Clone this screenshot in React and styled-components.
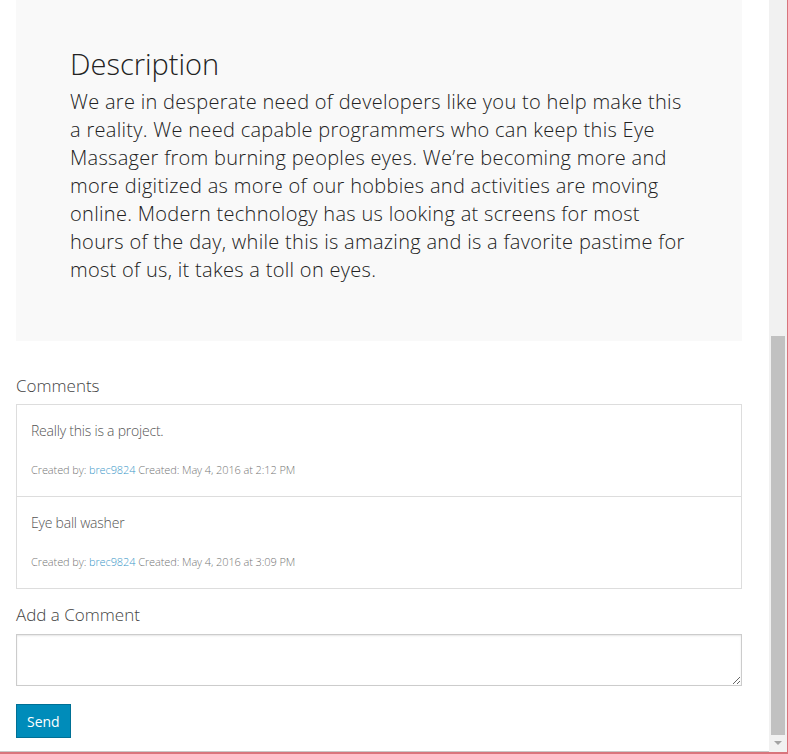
import React from 'react';
import styled, { createGlobalStyle } from 'styled-components';

const GlobalStyle = createGlobalStyle`
  html, body {
    margin: 0;
    padding: 0;
    background: #fff;
    overflow: hidden;
  }
  * { box-sizing: border-box; }
`

const Frame = styled.div`
  display: flex;
  width: 788px;
  height: 754px;
  border-right: 1px solid #d9747c;
  border-bottom: 2px solid #d9747c;
  font-family: 'Open Sans', 'Liberation Sans', sans-serif;
  font-weight: 300;
`

const Page = styled.div`
  flex: 1;
  display: flex;
  flex-direction: column;
  padding: 0 27px 0 16px;
  border-bottom: 1px solid #c8c8c8;
  overflow: hidden;
`

const DescriptionPanel = styled.section`
  background: #f9f9f9;
  padding: 45px 54px 57px;
`

const Heading = styled.h2`
  margin: 0;
  font-size: 29px;
  line-height: 38px;
  font-weight: 300;
  color: #222;
`

const Body = styled.p`
  margin: 5px 0 0;
  font-size: 20px;
  line-height: 28px;
  letter-spacing: 0.3px;
  color: #222;
`

const Label = styled.div`
  margin-top: ${p => p.top}px;
  font-size: 17px;
  line-height: 24px;
  color: #444;
`

const CommentList = styled.div`
  margin-top: 6px;
  border: 1px solid #ddd;
`

const Comment = styled.div`
  padding: 16px 14px 18px;
  & + & { border-top: 1px solid #ddd; }
`

const CommentText = styled.div`
  font-size: 14px;
  line-height: 20px;
  letter-spacing: -0.22px;
  color: #555;
`

const Meta = styled.div`
  margin-top: 21px;
  font-size: 11px;
  line-height: 16px;
  letter-spacing: -0.1px;
  color: #777;
`

const User = styled.span`
  color: #3b98c9;
`

const TextArea = styled.textarea`
  display: block;
  width: 100%;
  height: 52px;
  margin-top: 7px;
  border: 1px solid #ccc;
  box-shadow: inset 0 1px 2px rgba(0, 0, 0, 0.1);
  background: #fff;
  font-family: inherit;
  resize: vertical;
`

const SendButton = styled.button`
  align-self: flex-start;
  margin-top: 18px;
  height: 34px;
  padding: 0 10px;
  border: 1px solid #007095;
  background: #008cba;
  color: #fff;
  font-family: 'Open Sans', 'Liberation Sans', sans-serif;
  font-size: 14px;
  font-weight: 400;
`

const ScrollTrack = styled.div`
  width: 18px;
  display: flex;
  flex-direction: column;
  background: #f1f1f1;
  padding: 336px 2px 0;
`

const ScrollThumb = styled.div`
  height: 399px;
  background: #c1c1c1;
`

const ScrollArrow = styled.div`
  margin: 6px auto 0;
  width: 0;
  height: 0;
  border-left: 4px solid transparent;
  border-right: 4px solid transparent;
  border-top: 4px solid #a3a3a3;
`

const comments = [
  { text: 'Really this is a project.', user: 'brec9824', date: 'May 4, 2016 at 2:12 PM' },
  { text: 'Eye ball washer', user: 'brec9824', date: 'May 4, 2016 at 3:09 PM' },
];

const App = () => {
  return (
    <Frame>
      <GlobalStyle />
      <Page>
        <DescriptionPanel>
          <Heading>Description</Heading>
          <Body>
            We are in desperate need of developers like you to help make this a reality. We need capable
            programmers who can keep this Eye Massager from burning peoples eyes. We’re becoming more and
            more digitized as more of our hobbies and activities are moving online. Modern technology has us
            looking at screens for most hours of the day, while this is amazing and is a favorite pastime for
            most of us, it takes a toll on eyes.
          </Body>
        </DescriptionPanel>

        <Label top={33}>Comments</Label>
        <CommentList>
          {comments.map((c, i) => (
            <Comment key={i}>
              <CommentText>{c.text}</CommentText>
              <Meta>Created by: <User>{c.user}</User> Created: {c.date}</Meta>
            </Comment>
          ))}
        </CommentList>

        <Label top={14}>Add a Comment</Label>
        <TextArea />
        <SendButton type="button">Send</SendButton>
      </Page>
      <ScrollTrack>
        <ScrollThumb />
        <ScrollArrow />
      </ScrollTrack>
    </Frame>
  );
}

export default App;
